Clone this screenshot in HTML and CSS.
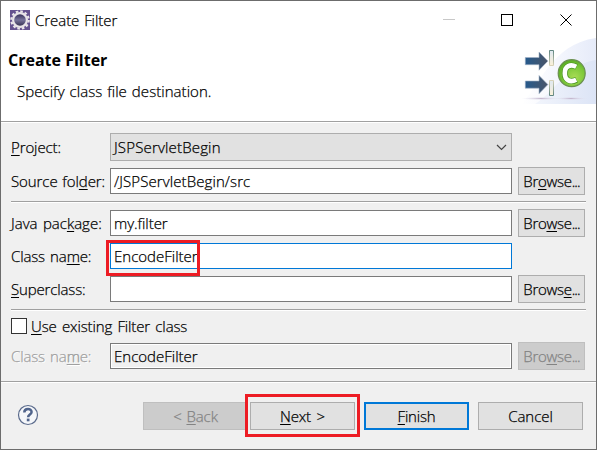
FILE: index.html
```html
<!DOCTYPE html>
<html lang="en">
<head>
<meta charset="utf-8">
<title>Create Filter</title>
<link rel="stylesheet" href="styles.css">
</head>
<body>
<div class="window">
  <header class="titlebar">
    <svg class="app-icon" width="20" height="20" viewBox="0 0 20 20">
      <defs><linearGradient id="lens" x1="0" y1="0" x2="0" y2="1"><stop offset="0" stop-color="#2c2450"/><stop offset=".5" stop-color="#77739a"/><stop offset="1" stop-color="#2b2645"/></linearGradient></defs>
      <rect width="20" height="20" fill="#65528f"/>
      <circle cx="10" cy="10" r="8.700" fill="none" stroke="#eae6ea" stroke-width="2.200" stroke-dasharray="2.600 1.955"/>
      <circle cx="10" cy="10" r="6.900" fill="url(#lens)" stroke="#e8e4e8" stroke-width="2.200"/>
    </svg>
    <span class="caption t-caption">Create Filter</span>
    <svg class="controls" width="130" height="14" viewBox="0 0 130 14">
      <path d="M0 6.500h12" stroke="#c8c8c8"/>
      <rect x="58.500" y="1.500" width="11" height="11" fill="none" stroke="#000"/>
      <path d="M117.500 1.500l11 11M128.500 1.500l-11 11" stroke="#000" fill="none"/>
    </svg>
  </header>
  <section class="banner">
    <div class="banner-text">
      <h1 class="t-heading">Create Filter</h1>
      <p class="t-sub">Specify class file destination.</p>
    </div>
    <svg class="banner-art" width="75" height="66" viewBox="0 0 75 66">
      <defs>
        <linearGradient id="sky" x1="0" y1="0" x2="1" y2="0"><stop offset="0" stop-color="#fff"/><stop offset=".5" stop-color="#f4f6fd"/><stop offset="1" stop-color="#e6ebf9"/></linearGradient>
        <linearGradient id="swell" x1="0" y1="0" x2="1" y2="0"><stop offset="0" stop-color="#f2f5fc"/><stop offset="1" stop-color="#dce4f6"/></linearGradient>
        <linearGradient id="arrow" x1="0" y1="0" x2="1" y2="0"><stop offset="0" stop-color="#265a8c"/><stop offset="1" stop-color="#4a5569"/></linearGradient>
        <linearGradient id="bar" x1="0" y1="0" x2="0" y2="1"><stop offset="0" stop-color="#dfe9f2"/><stop offset="1" stop-color="#f9f0d8"/></linearGradient>
        <linearGradient id="edge" x1="0" y1="0" x2="0" y2="1"><stop offset="0" stop-color="#5f8580"/><stop offset="1" stop-color="#d8d2b8"/></linearGradient>
        <linearGradient id="edge2" x1="0" y1="0" x2="0" y2="1"><stop offset="0" stop-color="#d8d2b8"/><stop offset="1" stop-color="#5f8580"/></linearGradient>
        <radialGradient id="ball" cx=".6" cy=".65" r=".65"><stop offset="0" stop-color="#a9dc55"/><stop offset=".6" stop-color="#7cc83a"/><stop offset="1" stop-color="#5cae26"/></radialGradient>
        <radialGradient id="shade"><stop offset="0" stop-color="#c3b5cc"/><stop offset="1" stop-color="#e6e8f5" stop-opacity="0"/></radialGradient>
      </defs>
      <path d="M0 66C18 50 30 6 75 0V66z" fill="url(#sky)"/>
      <path d="M14 66C34 54 46 26 75 22V66z" fill="url(#swell)"/>
      <ellipse cx="20" cy="60.500" rx="20" ry="1.600" fill="url(#shade)"/>
      <ellipse cx="50" cy="60.500" rx="17" ry="1.600" fill="url(#shade)"/>
      <g fill="url(#arrow)" stroke="#a3b2c8" stroke-width=".6">
        <path d="M4.300 19.500h13.700v-5.500l8.900 9.100-8.900 9.100v-5.500h-13.700z"/>
        <path d="M4.300 43h13.700v-5.500l8.900 9.100-8.900 9.100v-5.500h-13.700z"/>
      </g>
      <g fill="url(#bar)" stroke-width="1">
        <path d="M28.500 12.500h4v15h-4z" stroke="url(#edge)"/>
        <path d="M28.500 42.500h4v15h-4z" stroke="url(#edge2)"/>
      </g>
      <circle cx="50.700" cy="35.200" r="13.500" fill="url(#ball)" stroke="#6b8f52" stroke-width="1.200"/>
      <g fill="none">
        <path d="M55.600 28.700c-6-2.900-11.800-.8-11.800 6.600s5.800 9.300 11.800 6.500" stroke="#4a9422" stroke-width="6"/>
        <path d="M55.200 28.700c-5.800-2.900-11.400-.8-11.400 6.600s5.600 9.300 11.400 6.500" stroke="#fff" stroke-width="4.600"/>
      </g>
    </svg>
  </section>
  <main class="form">
    <div class="row r-project">
      <label class="t-project"><u>P</u>roject:</label>
      <div class="field combo"><span class="t-jsp">JSPServletBegin</span><svg width="11" height="7" viewBox="0 0 11 7"><path d="M1 1l4.500 4.500L10 1" fill="none" stroke="#444" stroke-width="1.200"/></svg></div>
    </div>
    <div class="row r-source">
      <label class="t-source">Source fol<u>d</u>er:</label>
      <div class="field"><span class="t-path">/JSPServletBegin/src</span></div>
      <div class="button"><span class="t-browse">Br<u>o</u>wse<span class="dots">...</span></span></div>
    </div>
    <div class="rule"></div>
    <div class="row r-package">
      <label class="t-package">Java pac<u>k</u>age:</label>
      <div class="field"><span class="t-my">my.filter</span></div>
      <div class="button"><span class="t-browse">Bro<u>w</u>se<span class="dots">...</span></span></div>
    </div>
    <div class="row r-class">
      <label class="t-class">Class na<u>m</u>e:</label>
      <div class="field focused"><span class="t-encode">EncodeFilter</span><i class="mark mark-field"></i></div>
    </div>
    <div class="row r-super">
      <label class="t-super"><u>S</u>uperclass:</label>
      <div class="field"></div>
      <div class="button"><span class="t-browse">Brows<u>e</u><span class="dots">...</span></span></div>
    </div>
    <div class="rule"></div>
    <div class="check"><i class="box"></i><span class="t-use"><u>U</u>se existing Filter class</span></div>
    <div class="row r-existing">
      <label class="t-class dim">Class na<u>m</u>e:</label>
      <div class="field readonly"><span class="t-encode">EncodeFilter</span></div>
      <div class="button disabled"><span class="t-browse">Bro<u>w</u>se<span class="dots">...</span></span></div>
    </div>
  </main>
  <footer class="footer">
    <svg class="help" width="22" height="22" viewBox="0 0 22 22">
      <circle cx="11" cy="11" r="9.500" fill="#f5f7fa" stroke="#5b6b8c" stroke-width="1.200"/>
      <path d="M7.300 8.500c0-4.700 7.300-4.700 7.300-.5 0 2.600-3.500 2.600-3.500 5.300" fill="none" stroke="#50648c" stroke-width="2.500"/>
      <rect x="9.800" y="14.600" width="2.700" height="2.700" fill="#50648c"/>
    </svg>
    <div class="button disabled back"><span class="t-back">&lt; <u>B</u>ack</span></div>
    <div class="button next"><span class="t-next"><u>N</u>ext &gt;</span><i class="mark mark-next"></i></div>
    <div class="button primary"><span class="t-finish"><u>F</u>inish</span></div>
    <div class="button cancel"><span class="t-cancel">Cancel</span></div>
  </footer>
</div>
</body>
</html>
```
FILE: styles.css
```css
* { box-sizing: border-box; }
body { margin: 0; font: 300 15px/20px "Open Sans", "Noto Sans", sans-serif; color: #000; -webkit-text-stroke: .25px; }
.window { width: 597px; height: 450px; border: 1px solid #6c6c6c; background: #f0f0f0; display: flex; flex-direction: column; }
span, label, h1, p { white-space: pre; }
u { text-decoration-thickness: 1px; text-underline-offset: 2px; text-decoration-skip-ink: none; }

.titlebar { height: 37px; background: #fff; display: flex; align-items: center; padding: 0 22px 0 9px; }
.caption { margin-left: 5px; flex: 1; }
.controls { margin-right: 1px; }

.banner { height: 85px; background: #fff; border-bottom: 1px solid #fff; box-shadow: inset 0 -1px #a0a0a0; display: flex; justify-content: space-between; padding-left: 7px; }
.banner-text { padding-top: 11px; }
h1 { margin: 0; font-size: 16px; line-height: 22px; -webkit-text-stroke: 0; }
p { margin: 10px 0 0 9px; }

.form { padding: 10px 10px 0; height: 258px; display: flex; flex-direction: column; }
.row { display: grid; grid-template-columns: 99px 402px 73px; align-items: center; height: 28px; flex: none; }
.row .button { margin-left: 6px; width: 67px; }
.field { height: 26px; background: #fff; border: 1px solid #7a7a7a; padding-left: 3px; display: flex; align-items: center; position: relative; }
.combo { height: 28px; background: #e1e1e1; border-color: #adadad; justify-content: space-between; padding-right: 4px; }
.focused { border-color: #0078d7; }
.readonly { background: #f0f0f0; box-shadow: inset 0 0 0 1px #fff; }
.button { height: 28px; background: #e1e1e1; border: 1px solid #adadad; display: flex; align-items: center; justify-content: center; position: relative; }
.disabled { background: #ccc; border-color: #bfbfbf; color: #838383; }
.primary { border: 2px solid #0078d7; }
.dim { color: #a0a0a0; text-shadow: 1px 1px #fff; }
.r-source { margin-top: 6px; }
.rule { height: 2px; flex: none; background: #fff; border-top: 1px solid #a0a0a0; }
.r-source + .rule { margin-top: 6px; }
.r-package { margin-top: 6px; }
.r-class, .r-super { margin-top: 5px; }
.r-super + .rule { margin-top: 6px; }
.check { display: flex; align-items: center; height: 16px; margin-top: 7px; flex: none; }
.box { width: 16px; height: 16px; border: 1px solid #333; background: #fff; margin-right: 4px; }
.r-existing { margin-top: 8px; }

.footer { flex: 1; box-shadow: inset 0 1px #a0a0a0, inset 0 2px #fff; display: flex; align-items: flex-start; padding: 21px 13px 0 16px; }
.help { margin: 2px 104px 0 0; }
.footer .button { width: 105px; flex: none; }
.next { margin-left: 2px; }
.footer .primary { margin-left: 9px; }
.cancel { margin-left: 9px; }

.t-caption { letter-spacing: -.05px; word-spacing: 1px; }
.t-sub { letter-spacing: .05px; word-spacing: 1px; }
.t-project { letter-spacing: -.1px; }
.t-source { letter-spacing: -.08px; word-spacing: 1px; }
.t-jsp { letter-spacing: .17px; }
.t-path { letter-spacing: .1px; }
.t-package { letter-spacing: 0; word-spacing: 1.500px; }
.t-my { letter-spacing: -.05px; }
.t-class { letter-spacing: -.15px; word-spacing: 1.500px; }
.t-encode { letter-spacing: 0; }
.t-super { letter-spacing: -.15px; }
.t-use { letter-spacing: -.12px; word-spacing: 1.500px; }
.t-browse { letter-spacing: -.3px; }
.dots { letter-spacing: -.9px; }
.t-back { letter-spacing: -.1px; word-spacing: 1px; }
.t-next { letter-spacing: -.2px; word-spacing: 2px; }
.t-finish { letter-spacing: -.2px; }
.t-cancel { letter-spacing: -.05px; }

.mark { position: absolute; border: 3px solid #ed1c24; }
.mark-field { left: -5px; top: -4px; width: 94px; height: 36px; }
.mark-next { left: -6px; top: -9px; width: 115px; height: 43px; }
```
